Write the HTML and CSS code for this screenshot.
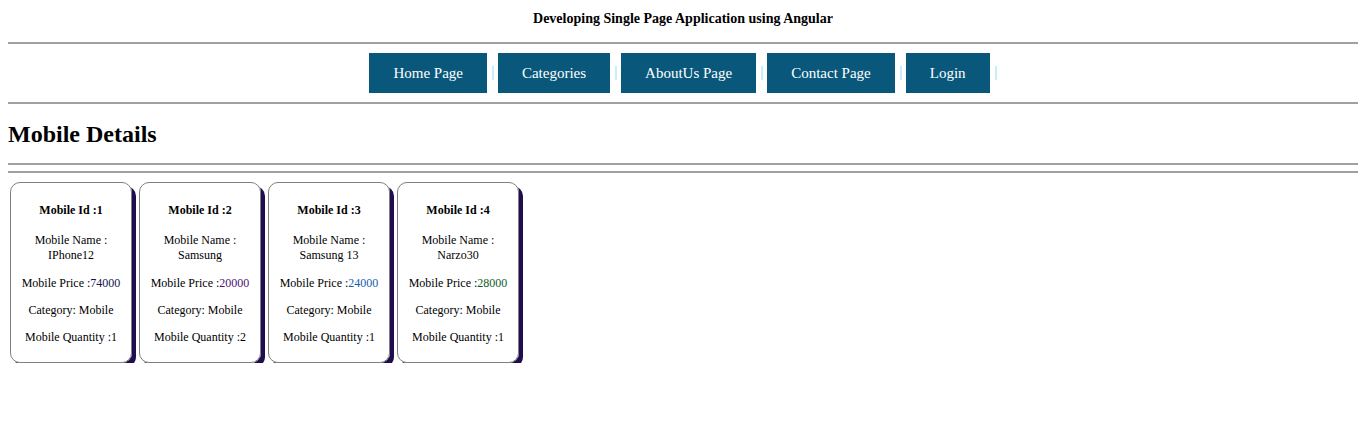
FILE: index.html
```html
<!DOCTYPE html>
<html>
<head>
<meta charset="utf-8">
<title>Mobile Details</title>
<link rel="stylesheet" href="styles.css">
</head>
<body>
<h5 class="title">Developing Single Page Application using Angular</h5>
<hr>
<nav class="nav">
  <a class="nav-btn">Home Page</a><span class="sep"></span>
  <a class="nav-btn">Categories</a><span class="sep"></span>
  <a class="nav-btn">AboutUs Page</a><span class="sep"></span>
  <a class="nav-btn">Contact Page</a><span class="sep"></span>
  <a class="nav-btn">Login</a><span class="sep"></span>
</nav>
<hr>
<h2 class="heading">Mobile Details</h2>
<hr>
<hr>
<div class="cards">
  <div class="card">
    <p class="id">Mobile Id :1</p>
    <p>Mobile Name : IPhone12</p>
    <p>Mobile Price :<span class="p-navy">74000</span></p>
    <p>Category: Mobile</p>
    <p>Mobile Quantity :1</p>
  </div>
  <div class="card">
    <p class="id">Mobile Id :2</p>
    <p>Mobile Name : Samsung</p>
    <p>Mobile Price :<span class="p-purple">20000</span></p>
    <p>Category: Mobile</p>
    <p>Mobile Quantity :2</p>
  </div>
  <div class="card">
    <p class="id">Mobile Id :3</p>
    <p>Mobile Name : Samsung 13</p>
    <p>Mobile Price :<span class="p-blue">24000</span></p>
    <p>Category: Mobile</p>
    <p>Mobile Quantity :1</p>
  </div>
  <div class="card">
    <p class="id">Mobile Id :4</p>
    <p>Mobile Name : Narzo30</p>
    <p>Mobile Price :<span class="p-green">28000</span></p>
    <p>Category: Mobile</p>
    <p>Mobile Quantity :1</p>
  </div>
</div>
</body>
</html>
```
FILE: styles.css
```css
body {
  margin: 8px;
  font-family: "Liberation Serif", "Times New Roman", serif;
  color: #000;
  background: #fff;
}
.title {
  text-align: center;
  font-size: 14px;
  line-height: 16px;
  margin: 3px 0 15px;
}
hr {
  border: none;
  border-top: 2px solid #a0a0a0;
  margin: 0;
}
.nav {
  display: flex;
  justify-content: center;
  align-items: center;
  padding: 9px 0 9px 4px;
}
.nav-btn {
  display: block;
  background: #09587b;
  color: #fff;
  font-size: 15px;
  height: 40px;
  line-height: 40px;
  padding: 0 24px;
  cursor: pointer;
}
.sep {
  display: block;
  width: 2px;
  height: 14px;
  margin: 0 4px 0 5px;
  background: #c8eff8;
}
.heading {
  font-size: 24px;
  margin: 0;
  padding: 17px 0 16px 0;
  line-height: 26px;
}
.heading + hr {
  margin-bottom: 6px;
}
.cards {
  display: flex;
  gap: 7px;
  padding: 9px 0 0 2px;
}
.card {
  width: 120px;
  border: 1px solid #808080;
  border-radius: 10px;
  box-shadow: 4px 4px 0 #200d50;
  text-align: center;
  font-size: 12px;
  padding: 20px 0 5px;
  box-sizing: content-box;
}
.card p {
  margin: 0 0 12px;
  line-height: 15px;
  padding: 0 8px;
}
.card p.id {
  font-weight: bold;
  margin-bottom: 15px;
}
.card p:nth-child(2) {
  margin-bottom: 13px;
}
.p-navy { color: #141450; }
.p-purple { color: #4a1470; }
.p-blue { color: #1a5cb0; }
.p-green { color: #125a30; }
```
